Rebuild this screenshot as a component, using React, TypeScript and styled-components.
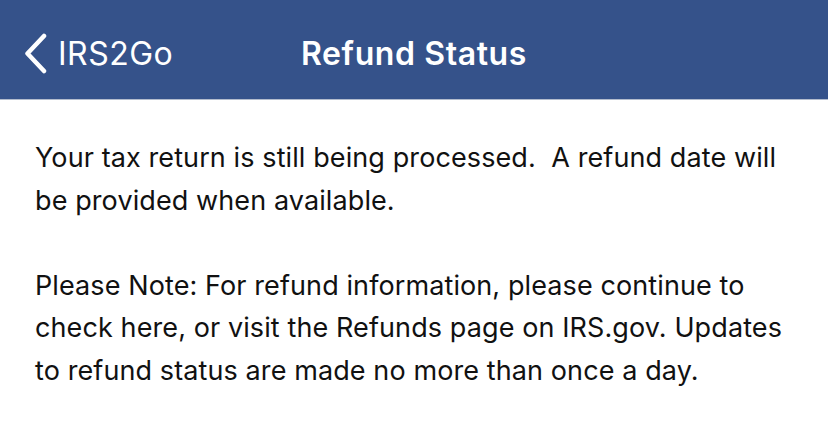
import styled, { createGlobalStyle } from 'styled-components';

const GlobalStyle = createGlobalStyle`
  html, body {
    margin: 0;
    padding: 0;
    background: #ffffff;
  }
  body {
    font-family: Inter, "Liberation Sans", Arial, sans-serif;
    -webkit-font-smoothing: antialiased;
  }
`;

const Screen = styled.div`
  width: 828px;
  height: 421px;
  background: #ffffff;
  overflow: hidden;
`;

const NavBar = styled.header`
  display: grid;
  grid-template-columns: 1fr auto 1fr;
  align-items: center;
  box-sizing: border-box;
  height: 100px;
  padding-top: 8px;
  background-color: #35528a;
  border-bottom: 1px solid #b3bccd;
  color: #ffffff;
`;

const BackButton = styled.button`
  display: flex;
  align-items: center;
  gap: 11px;
  justify-self: start;
  padding: 0 0 0 24px;
  border: none;
  background: none;
  color: inherit;
  font-family: inherit;
  font-size: 32px;
  font-weight: 400;
  letter-spacing: 0.5px;
  cursor: pointer;

  svg {
    display: block;
  }
`;

const Title = styled.h1`
  margin: 0;
  font-size: 32px;
  font-weight: 600;
  letter-spacing: 0.6px;
`;

const Content = styled.main`
  padding: 37px 28px 0 35px;
  color: #111111;
  font-size: 27px;
  letter-spacing: 0.1px;
  line-height: 42.5px;
`;

const Paragraph = styled.p`
  margin: 0 0 42.5px;
  white-space: pre-wrap;
`;

const Chevron = () => (
  <svg width="23" height="41" viewBox="0 0 23 41" fill="none">
    <path
      d="M20 3 L3.5 20.5 L20 38"
      stroke="#ffffff"
      strokeWidth="4.5"
      strokeLinecap="round"
      strokeLinejoin="round"
    />
  </svg>
);

const App = () => {
  return (
    <>
      <GlobalStyle />
      <Screen>
        <NavBar>
          <BackButton>
            <Chevron />
            IRS2Go
          </BackButton>
          <Title>Refund Status</Title>
          <span />
        </NavBar>
        <Content>
          <Paragraph>
            Your tax return is still being processed.  A refund date will be provided when available.
          </Paragraph>
          <Paragraph>
            Please Note: For refund information, please continue to check here, or visit the Refunds page on IRS.gov. Updates to refund status are made no more than once a day.
          </Paragraph>
        </Content>
      </Screen>
    </>
  );
};

export default App;
